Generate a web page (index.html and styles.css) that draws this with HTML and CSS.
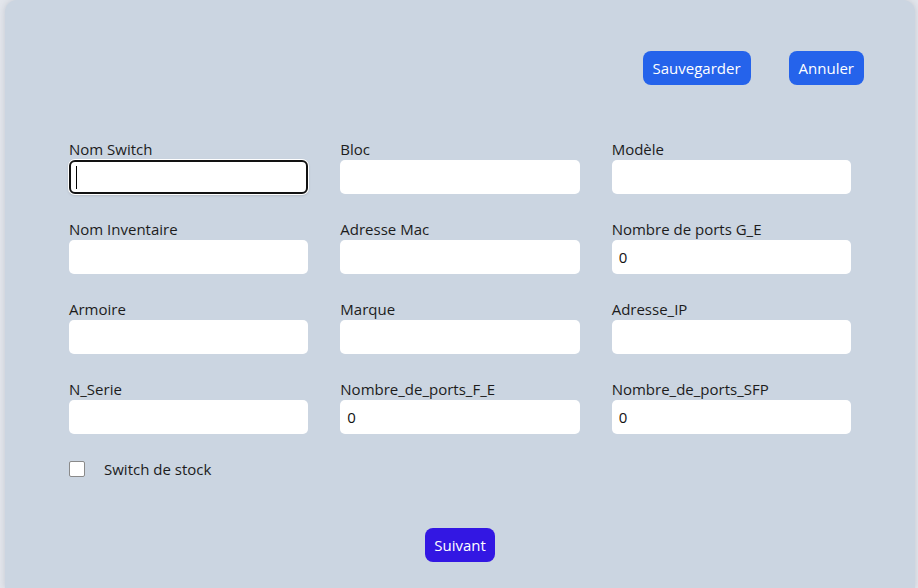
FILE: index.html
```html
<!DOCTYPE html>
<html lang="fr">
<head>
<meta charset="utf-8">
<title>Switch</title>
<link rel="stylesheet" href="styles.css">
</head>
<body>
<div class="card">
  <div class="actions">
    <button class="btn btn-blue">Sauvegarder</button>
    <button class="btn btn-blue">Annuler</button>
  </div>
  <form class="form-grid">
    <div class="field">
      <label>Nom Switch</label>
      <div class="input-wrap">
        <input type="text" class="input focused">
        <span class="caret"></span>
      </div>
    </div>
    <div class="field"><label>Bloc</label><input type="text" class="input"></div>
    <div class="field"><label>Modèle</label><input type="text" class="input"></div>

    <div class="field"><label>Nom Inventaire</label><input type="text" class="input"></div>
    <div class="field"><label>Adresse Mac</label><input type="text" class="input"></div>
    <div class="field"><label>Nombre de ports G_E</label><input type="text" class="input" value="0"></div>

    <div class="field"><label>Armoire</label><input type="text" class="input"></div>
    <div class="field"><label>Marque</label><input type="text" class="input"></div>
    <div class="field"><label>Adresse_IP</label><input type="text" class="input"></div>

    <div class="field"><label>N_Serie</label><input type="text" class="input"></div>
    <div class="field"><label>Nombre_de_ports_F_E</label><input type="text" class="input" value="0"></div>
    <div class="field"><label>Nombre_de_ports_SFP</label><input type="text" class="input" value="0"></div>
  </form>
  <div class="check-row">
    <input type="checkbox" class="check">
    <span class="check-label">Switch de stock</span>
  </div>
  <div class="footer">
    <button class="btn btn-indigo">Suivant</button>
  </div>
</div>
</body>
</html>
```

FILE: styles.css
```css
* { box-sizing: border-box; }
html, body { margin: 0; padding: 0; }
body {
  background: #e3e6ec;
  font-family: "Open Sans", "Noto Sans", sans-serif;
  font-size: 15px;
  color: #1a1a1a;
  overflow: hidden;
}
.card {
  margin: 0 3px 0 5px;
  background: #cbd5e1;
  border-radius: 12px 12px 0 0;
  box-shadow: 0 0 6px rgba(100, 110, 130, 0.25);
  min-height: 100vh;
  padding: 51px 51px 0 64px;
}
.actions {
  display: flex;
  justify-content: flex-end;
  gap: 38px;
}
.btn {
  font-family: inherit;
  font-size: 15px;
  border: none;
  color: #fff;
  height: 34px;
  padding: 0 10px;
  border-radius: 8px;
  line-height: 34px;
}
.btn-blue { background: #2563eb; }
.btn-indigo { background: #3317e3; padding: 0 9px; }
.form-grid {
  margin: 55px 13px 0 0;
  display: grid;
  grid-template-columns: repeat(3, 1fr);
  column-gap: 32px;
  row-gap: 26px;
}
.field {
  display: flex;
  flex-direction: column;
}
.field label {
  height: 20px;
  line-height: 18px;
  font-size: 15px;
  color: #1c1c1c;
}
.input-wrap { position: relative; }
.input {
  width: 100%;
  height: 34px;
  border: none;
  border-radius: 5px;
  background: #fff;
  padding: 0 7px;
  font-family: inherit;
  font-size: 15px;
  color: #111;
  outline: none;
}
.input.focused {
  border: 2px solid #121212;
  border-radius: 6px;
  box-shadow: 0 0 0 1px #ffffff, 0 1px 3px rgba(0,0,0,0.25);
}
.caret {
  position: absolute;
  left: 7px;
  top: 6px;
  width: 1px;
  height: 23px;
  background: #000;
}
.check-row {
  display: flex;
  align-items: center;
  gap: 19px;
  margin-top: 26px;
  height: 17px;
}
.check {
  appearance: none;
  -webkit-appearance: none;
  margin: 0;
  width: 16px;
  height: 16px;
  border: 1px solid #8a8a8a;
  border-radius: 2px;
  background: #fff;
}
.check-label { font-size: 15px; color: #1c1c1c; }
.footer {
  display: flex;
  justify-content: center;
  margin-top: 51px;
  padding-right: 13px;
}
```
